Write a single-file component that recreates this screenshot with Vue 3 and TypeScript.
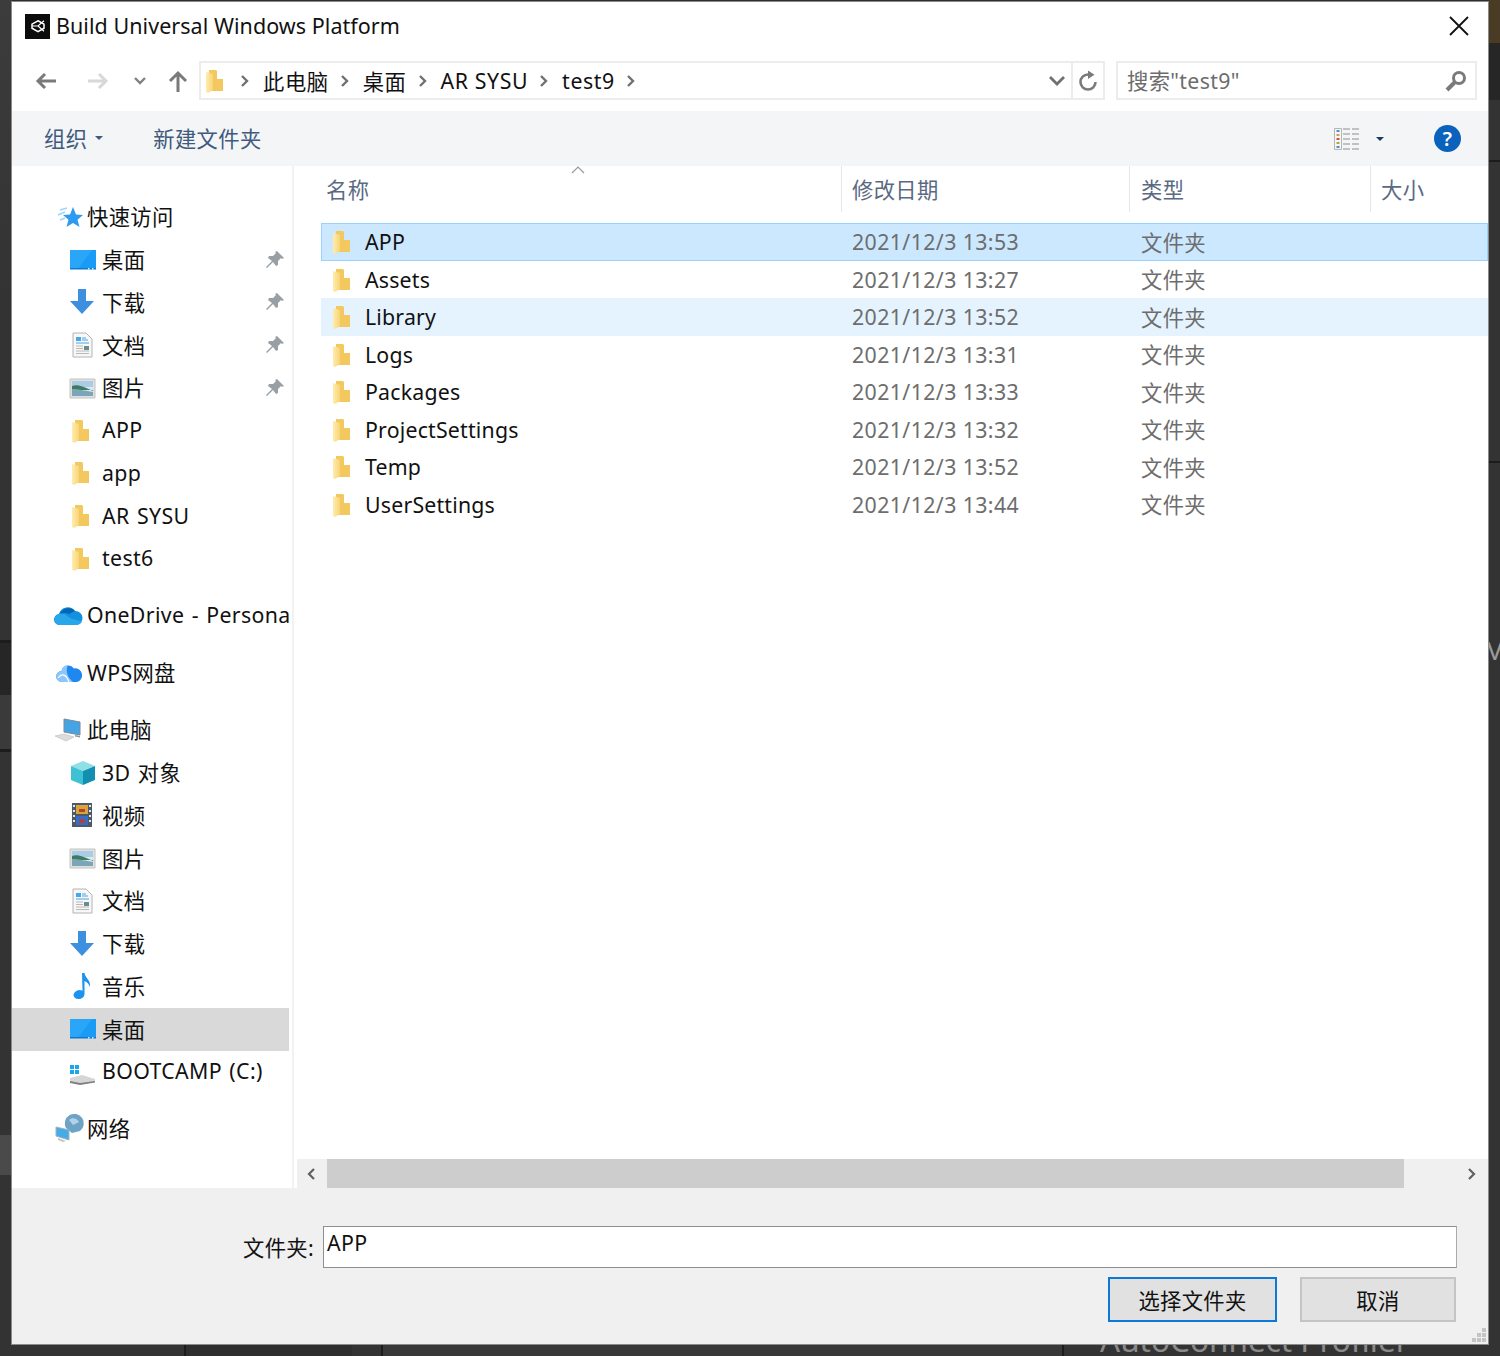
<script setup lang="ts">
interface Shape {
  d: string
  fill?: string
  stroke?: string
  width?: number
}

interface NavItem {
  label: string
  icon: string
  level: number
  pinned?: boolean
  active?: boolean
}

const icons: Record<string, Shape[]> = {
  star: [
    { d: 'M7 7l7-2M5 12l7-3M7 17l5-2', stroke: '#9ad6fb', width: 1.4 },
    { d: 'M20 4l3 7.500 7 .5-5.500 4.800 2 7.200-6.500-4-6.500 4 2-7.200L10 12l7-.5z', fill: '#2f9bf0' }
  ],
  desktop: [
    { d: 'M1 4h26v19H1z', fill: '#1a9bf5' },
    { d: 'M1 4h22L9 23H1z', fill: '#2aa6f8' },
    { d: 'M1 22h26v1.500H1z', fill: '#0c78cf' },
    { d: 'M19 22h1.500v1.500H19zM23 22h1.500v1.500H23z', fill: '#d8f0ff' }
  ],
  download: [
    { d: 'M9 1h8v12h8L13 26 1 13h8z', fill: '#3d8fe0' }
  ],
  doc: [
    { d: 'M4 2h13l6 6v18H4z', fill: '#f7f7f7', stroke: '#b4b4b4', width: 1 },
    { d: 'M7 6h5v4H7z', fill: '#4aa7e6' },
    { d: 'M13 7h4M13 9h6M7 12h13', stroke: '#4aa7e6', width: 1 },
    { d: 'M7 15h7M7 17.500h7M7 20h13M7 22.500h13', stroke: '#b8b8b8', width: 1 },
    { d: 'M15 15h5v4h-5z', fill: '#6b8c8a' }
  ],
  picture: [
    { d: 'M1 5h25v19H1z', fill: '#e0e0e0', stroke: '#c4c4c4', width: 1 },
    { d: 'M3 7h21v15H3z', fill: '#dbe8ee' },
    { d: 'M3 7h21v6H3z', fill: '#a9cde6' },
    { d: 'M3 12c6-2 12 1 21 5v-1H3z', fill: '#3f7a63' },
    { d: 'M3 15c8 0 13 2 21 3v4H3z', fill: '#7ba6b8' }
  ],
  folder: [
    { d: 'M6 3h7l1 1v8h6v12H6z', fill: '#f3c95f' },
    { d: 'M3 5l7 2v16l-5 3-2-1z', fill: 'url(#folderFill)' }
  ],
  cloud: [
    { d: 'M7 23a5.500 5.500 0 0 1-1-11 9 9 0 0 1 16-3 7 7 0 0 1 1 14z', fill: '#1490df' },
    { d: 'M7 23a5.500 5.500 0 0 1-2-10.500c6-3 9 2 13 4l11 3c-1 2-3 3.500-6 3.500z', fill: '#28a8ea' },
    { d: 'M7 12a9 9 0 0 1 15-3l-6 3c-3-1.500-6-1.500-9 0z', fill: '#0364b8' }
  ],
  wps: [
    { d: 'M9 23a5.500 5.500 0 0 1-.5-11A7 7 0 0 1 21 9.500 6.800 6.800 0 0 1 23.500 23z', fill: '#1f87f0' },
    { d: 'M9 23a5.500 5.500 0 0 1-.5-11A7 7 0 0 1 15 6c-3 6 0 13 5 17z', fill: '#8cc6fa' },
    { d: 'M5 19c4-5 8-4 11 4', stroke: '#fff', width: 1.2, fill: 'none' }
  ],
  computer: [
    { d: 'M11 3l16 3v13l-16-3z', fill: '#45a4e4', stroke: '#7b8a96', width: 1 },
    { d: 'M2 20l9-2 10 3-8 4z', fill: '#dcdcdc', stroke: '#bcbcbc', width: 0.6 },
    { d: 'M22 19l5 1v1.500l-5-1z', fill: '#8a96a0' }
  ],
  cube: [
    { d: 'M14 2l12 5-12 5L2 7z', fill: '#8de0e6' },
    { d: 'M2 7l12 5v14L2 21z', fill: '#3fc1d4' },
    { d: 'M14 12l12-5v14l-12 5z', fill: '#128fb0' }
  ],
  video: [
    { d: 'M3 2h20v24H3z', fill: '#4d5a66' },
    { d: 'M7 4h12v9H7z', fill: '#d9a43c' },
    { d: 'M7 15h12v9H7z', fill: '#2f6fd0' },
    { d: 'M10 8h6v3h-6zM10 18h6v4h-6z', fill: '#b8402f' },
    { d: 'M4 4h2v2H4zM4 9h2v2H4zM4 14h2v2H4zM4 19h2v2H4zM20 4h2v2h-2zM20 9h2v2h-2zM20 14h2v2h-2zM20 19h2v2h-2z', fill: '#e8e8e8' }
  ],
  music: [
    { d: 'M13 1h2.500c.5 5 6.500 7 5.500 14-1-3-3-5-5.500-6v13c0 3-3 5-6 5s-5-2-5-4 3-5 6-5c1 0 2 .3 3 .8z', fill: '#1c93ee' }
  ],
  drive: [
    { d: 'M1 7h4v4H1zM6 7h4v4H6zM1 12h4v4H1zM6 12h4v4H6z', fill: '#18a6ec' },
    { d: 'M1 20l12-3 13 4v3l-15 2-10-2z', fill: '#d6d6d6' },
    { d: 'M1 23l10 2 15-2v1.500L11 27 1 25z', fill: '#808080' }
  ],
  network: [
    { d: 'M13 13a9.500 9.500 0 1 1 14 3l-8 2z', fill: '#6da3c7' },
    { d: 'M16 5c3-3 8-2 10 2l-6 3z', fill: '#b4d2e4' },
    { d: 'M3 12l13 3v10L3 21z', fill: '#45ace8', stroke: '#a5b1ba', width: 1 },
    { d: 'M5 23l8 3-3 1-5-2z', fill: '#c6c6c6' }
  ]
}

const navGroups: NavItem[][] = [
  [
    { label: '快速访问', icon: 'star', level: 0 },
    { label: '桌面', icon: 'desktop', level: 1, pinned: true },
    { label: '下载', icon: 'download', level: 1, pinned: true },
    { label: '文档', icon: 'doc', level: 1, pinned: true },
    { label: '图片', icon: 'picture', level: 1, pinned: true },
    { label: 'APP', icon: 'folder', level: 1 },
    { label: 'app', icon: 'folder', level: 1 },
    { label: 'AR SYSU', icon: 'folder', level: 1 },
    { label: 'test6', icon: 'folder', level: 1 }
  ],
  [{ label: 'OneDrive - Personal', icon: 'cloud', level: 0 }],
  [{ label: 'WPS网盘', icon: 'wps', level: 0 }],
  [
    { label: '此电脑', icon: 'computer', level: 0 },
    { label: '3D 对象', icon: 'cube', level: 1 },
    { label: '视频', icon: 'video', level: 1 },
    { label: '图片', icon: 'picture', level: 1 },
    { label: '文档', icon: 'doc', level: 1 },
    { label: '下载', icon: 'download', level: 1 },
    { label: '音乐', icon: 'music', level: 1 },
    { label: '桌面', icon: 'desktop', level: 1, active: true },
    { label: 'BOOTCAMP (C:)', icon: 'drive', level: 1 }
  ],
  [{ label: '网络', icon: 'network', level: 0 }]
]

const crumbs = ['此电脑', '桌面', 'AR SYSU', 'test9']

const files = [
  { name: 'APP', date: '2021/12/3 13:53', state: 'selected' },
  { name: 'Assets', date: '2021/12/3 13:27', state: '' },
  { name: 'Library', date: '2021/12/3 13:52', state: 'hover' },
  { name: 'Logs', date: '2021/12/3 13:31', state: '' },
  { name: 'Packages', date: '2021/12/3 13:33', state: '' },
  { name: 'ProjectSettings', date: '2021/12/3 13:32', state: '' },
  { name: 'Temp', date: '2021/12/3 13:52', state: '' },
  { name: 'UserSettings', date: '2021/12/3 13:44', state: '' }
]
</script>

<template>
  <div class="screen">
    <svg class="defs" width="0" height="0" aria-hidden="true">
      <defs>
        <linearGradient id="folderFill" x1="0" y1="0" x2="1" y2="0">
          <stop offset="0" stop-color="#ffedb0" />
          <stop offset="1" stop-color="#f8d477" />
        </linearGradient>
      </defs>
    </svg>

    <!-- editor window showing behind the dialog -->
    <div class="gutter-left"></div>
    <div class="gutter-right"></div>
    <div class="gutter-bottom"></div>
    <div class="backdrop-text">AutoConnect Profiler</div>
    <div class="backdrop-v">V</div>

    <div class="dialog">
      <header class="titlebar">
        <span class="app-icon">
          <svg viewBox="0 0 24 24" width="18" height="18">
            <path d="M12 5l8 4.500v5.500l-8 4.500-8-4.500V9.500z" fill="none" stroke="#fff" stroke-width="2" />
            <path d="M4 12l8 0 8-7M12 12l8 7" fill="none" stroke="#fff" stroke-width="1.500" />
          </svg>
        </span>
        <span class="title">Build Universal Windows Platform</span>
        <svg class="close" viewBox="0 0 20 20" width="20" height="20">
          <path d="M1 1l18 18M19 1L1 19" stroke="#111" stroke-width="1.800" fill="none" />
        </svg>
      </header>

      <div class="navbar">
        <svg class="nav-arrow" viewBox="0 0 24 24" width="24" height="24">
          <path d="M22 12H4M11 5l-7 7 7 7" fill="none" stroke="#7a7a7a" stroke-width="3" />
        </svg>
        <svg class="nav-arrow forward" viewBox="0 0 24 24" width="24" height="24">
          <path d="M2 12h18M13 5l7 7-7 7" fill="none" stroke="#d8d8d8" stroke-width="3" />
        </svg>
        <svg class="nav-down" viewBox="0 0 14 10" width="14" height="10">
          <path d="M2 2l5 5 5-5" fill="none" stroke="#808080" stroke-width="2.400" />
        </svg>
        <svg class="nav-up" viewBox="0 0 24 24" width="24" height="24">
          <path d="M12 23V4M4 12l8-8 8 8" fill="none" stroke="#7a7a7a" stroke-width="3" />
        </svg>

        <div class="address">
          <svg class="crumb-folder" viewBox="0 0 28 28" width="28" height="28">
            <path v-for="(s, i) in icons.folder" :key="i" :d="s.d" :fill="s.fill" />
          </svg>
          <template v-for="crumb in crumbs" :key="crumb">
            <svg class="crumb-sep" viewBox="0 0 10 14" width="10" height="14">
              <path d="M2 2l5 5-5 5" fill="none" stroke="#707070" stroke-width="2.400" />
            </svg>
            <span class="crumb">{{ crumb }}</span>
          </template>
          <svg class="crumb-sep" viewBox="0 0 10 14" width="10" height="14">
            <path d="M2 2l5 5-5 5" fill="none" stroke="#707070" stroke-width="2.400" />
          </svg>
          <svg class="address-drop" viewBox="0 0 18 12" width="18" height="12">
            <path d="M2 2l7 7 7-7" fill="none" stroke="#707070" stroke-width="2.800" />
          </svg>
          <span class="refresh">
            <svg viewBox="0 0 22 22" width="22" height="22">
              <path d="M11 4.500A7.500 7.500 0 1 0 18.500 12" fill="none" stroke="#7a7a7a" stroke-width="2.600" />
              <path d="M11 .5V9l6.500-4.250z" fill="#7a7a7a" />
            </svg>
          </span>
        </div>

        <div class="search">
          <span class="search-text">搜索"test9"</span>
          <svg viewBox="0 0 24 24" width="24" height="24">
            <circle cx="15" cy="9" r="5.500" fill="none" stroke="#7a7a7a" stroke-width="3" />
            <path d="M10.500 13.500L3 21" stroke="#7a7a7a" stroke-width="4" fill="none" />
          </svg>
        </div>
      </div>

      <div class="toolbar">
        <span class="tool">组织<i class="caret"></i></span>
        <span class="tool new-folder">新建文件夹</span>
        <svg class="view-icon" viewBox="0 0 26 24" width="26" height="24">
          <path d="M.500 1.500h7v21h-7z" fill="#f6f6f6" stroke="#b5b5b5" />
          <path d="M2.500 3h3v2h-3z" fill="#4a90d0" />
          <path d="M2.500 7h3v2h-3z" fill="#d0a040" />
          <path d="M2.500 11h3v2h-3z" fill="#d05040" />
          <path d="M2.500 15h3v2h-3z" fill="#a0b040" />
          <path d="M2.500 19h3v2h-3z" fill="#4a90d0" />
          <path d="M9 2h7M18 2h7M9 7h7M18 7h7M9 12h7M18 12h7M9 17h7M18 17h7M9 22h7M18 22h7" stroke="#8d8d8d" stroke-width="1.200" />
        </svg>
        <i class="caret view-caret"></i>
        <span class="help">?</span>
      </div>

      <div class="main">
        <aside class="sidebar">
          <div v-for="(group, g) in navGroups" :key="g" class="nav-group">
            <div
              v-for="item in group"
              :key="item.label"
              class="nav-item"
              :class="{ active: item.active, child: item.level === 1 }"
            >
              <svg class="nav-icon" viewBox="0 0 28 28" width="28" height="28">
                <path
                  v-for="(s, i) in icons[item.icon]"
                  :key="i"
                  :d="s.d"
                  :fill="s.fill ?? 'none'"
                  :stroke="s.stroke"
                  :stroke-width="s.width"
                />
              </svg>
              <span class="nav-label">{{ item.label }}</span>
              <svg v-if="item.pinned" class="pin" viewBox="0 0 18 18" width="18" height="18">
                <path d="M11 0l7 7-2 1-1-1-3 3 0 4-2 1-3-4-6 6-1-1 6-6-4-3 1-2 4 0 3-3-1-1z" fill="#98a0a6" />
              </svg>
            </div>
          </div>
        </aside>

        <section class="content">
          <div class="list">
            <svg class="sort" viewBox="0 0 14 8" width="14" height="8">
              <path d="M1 7l6-6 6 6" fill="none" stroke="#9a9a9a" stroke-width="1.200" />
            </svg>
            <div class="columns">
              <span class="col col-name">名称</span>
              <span class="col col-date">修改日期</span>
              <span class="col col-type">类型</span>
              <span class="col col-size">大小</span>
            </div>
            <div v-for="file in files" :key="file.name" class="file" :class="file.state">
              <svg class="file-icon" viewBox="0 0 28 28" width="28" height="28">
                <path v-for="(s, i) in icons.folder" :key="i" :d="s.d" :fill="s.fill" />
              </svg>
              <span class="file-name">{{ file.name }}</span>
              <span class="file-date">{{ file.date }}</span>
              <span class="file-type">文件夹</span>
            </div>
          </div>
          <div class="hscroll">
            <svg viewBox="0 0 10 14" width="10" height="14">
              <path d="M8 2L3 7l5 5" fill="none" stroke="#606060" stroke-width="2.200" />
            </svg>
            <div class="thumb"></div>
            <svg viewBox="0 0 10 14" width="10" height="14">
              <path d="M2 2l5 5-5 5" fill="none" stroke="#606060" stroke-width="2.200" />
            </svg>
          </div>
        </section>
      </div>

      <footer class="footer">
        <div class="field">
          <label>文件夹:</label>
          <div class="field-input">APP</div>
        </div>
        <div class="buttons">
          <button class="btn primary">选择文件夹</button>
          <button class="btn">取消</button>
        </div>
        <svg class="grip" viewBox="0 0 15 15" width="15" height="15">
          <path d="M11 1h4v4h-4zM6 6h4v4H6zM11 6h4v4h-4zM1 11h4v4H1zM6 11h4v4H6zM11 11h4v4h-4z" fill="#c4c4c4" />
        </svg>
      </footer>
    </div>
  </div>
</template>

<style scoped>
.screen {
  position: relative;
  box-sizing: border-box;
  width: 1500px;
  height: 1356px;
  padding: 2px 12px 12px;
  overflow: hidden;
  background: #2e2e2e;
  font-family: "Noto Sans", "Noto Sans CJK SC", sans-serif;
  font-size: 21.3px;
  letter-spacing: 0.35px;
  color: #111;
}

.defs {
  position: absolute;
}

.gutter-left {
  position: absolute;
  left: 0;
  top: 0;
  width: 12px;
  height: 1356px;
  background: linear-gradient(#3c3c3c 0, #333 300px, #333 640px, #1c1c1c 640px 643px, #262626 643px 695px, #3a3a3a 695px 749px, #1c1c1c 749px 752px, #333 752px 1135px, #4a4a4a 1135px 1175px, #333 1175px);
}

.gutter-right {
  position: absolute;
  left: 1489px;
  top: 0;
  width: 11px;
  height: 1356px;
  background: linear-gradient(#4a3c24 0 43px, #262626 43px 100px, #333 100px 160px, #1c1c1c 160px 162px, #333 162px 461px, #1c1c1c 461px 463px, #333 463px);
}

.gutter-bottom {
  position: absolute;
  left: 0;
  top: 1344px;
  width: 1500px;
  height: 12px;
  background: linear-gradient(to right, #333 184px, #1c1c1c 184px 186px, #2e2e2e 186px 352px, #333 352px 381px, #1c1c1c 381px 383px, #383838 383px 1062px, #1c1c1c 1062px 1064px, #333 1064px);
}

.backdrop-text {
  position: absolute;
  left: 1100px;
  top: 1322px;
  font-size: 31.5px;
  letter-spacing: 0;
  line-height: 36px;
  color: #8a8a8a;
  white-space: nowrap;
}

.backdrop-v {
  position: absolute;
  left: 1487px;
  top: 632px;
  font-size: 26px;
  letter-spacing: 0;
  line-height: 36px;
  color: #9a9a9a;
}

.dialog {
  position: relative;
  display: flex;
  flex-direction: column;
  height: 100%;
  background: #fff;
  box-shadow: 0 0 0 1px #8a8a8a;
}

.titlebar {
  display: flex;
  align-items: center;
  height: 48px;
  padding: 0 19px 0 13px;
  flex: none;
}

.app-icon {
  display: flex;
  align-items: center;
  justify-content: center;
  width: 25px;
  height: 25px;
  margin-right: 6px;
  background: #0c0c0c;
}

.title {
  flex: 1;
  padding-bottom: 2px;
  font-size: 21.5px;
  letter-spacing: 0.05px;
  white-space: nowrap;
}

.navbar {
  display: flex;
  align-items: center;
  height: 61px;
  flex: none;
}

.nav-arrow {
  margin-left: 22px;
}

.nav-arrow.forward {
  margin-left: 28px;
}

.nav-down {
  margin-left: 23px;
}

.nav-up {
  margin-left: 19px;
}

.address {
  display: flex;
  align-items: center;
  box-sizing: border-box;
  width: 906px;
  height: 39px;
  margin-left: 9px;
  border: 2px solid #ececec;
}

.crumb-folder {
  margin: 0 -2px 0 2px;
}

.crumb-sep {
  margin: 0 13px 0 11px;
}

.crumb {
  padding-bottom: 1px;
  letter-spacing: 0.6px;
  white-space: nowrap;
}

.address-drop {
  margin-left: auto;
  margin-right: 5px;
}

.refresh {
  display: flex;
  align-items: center;
  justify-content: center;
  width: 30px;
  height: 100%;
  border-left: 2px solid #ececec;
}

.search {
  display: flex;
  align-items: center;
  justify-content: space-between;
  box-sizing: border-box;
  width: 361px;
  height: 39px;
  margin-left: 11px;
  padding: 0 7px 0 9px;
  border: 2px solid #ececec;
  color: #6d6d6d;
}

.search-text {
  padding-bottom: 3px;
}

.toolbar {
  display: flex;
  align-items: center;
  height: 55px;
  padding-left: 32px;
  background: #f3f5f7;
  color: #3f5a7c;
  flex: none;
}

.tool {
  display: flex;
  align-items: center;
  padding-bottom: 2px;
  white-space: nowrap;
}

.caret {
  display: inline-block;
  margin-left: 8px;
  border: 4px solid transparent;
  border-top-color: #3f5a7c;
  border-bottom-width: 0;
}

.new-folder {
  margin-left: 50px;
}

.view-icon {
  margin-left: auto;
}

.view-caret {
  margin-left: 16px;
  border-top-color: #1f3a60;
}

.help {
  display: flex;
  align-items: center;
  justify-content: center;
  width: 27px;
  height: 27px;
  margin: 0 27px 0 50px;
  border-radius: 50%;
  background: #0a62bd;
  color: #fff;
  font-size: 20px;
  font-weight: 600;
}

.main {
  display: flex;
  flex: 1;
  min-height: 0;
}

.sidebar {
  box-sizing: border-box;
  width: 282px;
  padding-top: 29.5px;
  border-right: 2px solid #f2f2f2;
  overflow: hidden;
  flex: none;
}

.nav-group {
  margin-bottom: 14.25px;
}

.nav-item {
  display: flex;
  align-items: center;
  width: 277px;
  height: 42.75px;
  padding-left: 41px;
  box-sizing: border-box;
  white-space: nowrap;
}

.nav-item.child {
  padding-left: 57px;
}

.nav-item.active {
  background: #d9d9d9;
}

.nav-icon {
  margin-right: 6px;
  overflow: visible;
  flex: none;
}

.nav-item.child .nav-icon {
  margin-right: 5px;
}

.nav-label {
  flex: 1;
  padding-bottom: 2px;
  word-spacing: 1.5px;
  overflow: hidden;
}

.pin {
  margin-right: 5px;
  flex: none;
}

.content {
  display: flex;
  flex-direction: column;
  flex: 1;
  min-width: 0;
  background: #fff;
}

.list {
  position: relative;
  flex: 1;
  padding-left: 27px;
}

.sort {
  position: absolute;
  left: 277px;
  top: 0;
}

.columns {
  display: grid;
  grid-template-columns: 521px 288px 241px 1fr;
  height: 46px;
  margin-bottom: 11px;
  align-items: stretch;
  color: #5a6a82;
}

.col {
  display: flex;
  align-items: center;
  padding: 0 0 2px 5px;
  border-right: 1px solid #e6e6e6;
}

.col-date,
.col-size {
  padding-left: 10px;
}

.col-type {
  padding-left: 11px;
}

.col-size {
  border-right: 0;
}

.file {
  display: grid;
  grid-template-columns: 487px 289px 1fr;
  align-items: center;
  box-sizing: border-box;
  height: 37.5px;
  position: relative;
  padding-left: 43px;
  border: 1px solid transparent;
}

.file.selected {
  background: #cce8ff;
  border-color: #99d1ff;
}

.file.hover {
  background: #e5f3ff;
}

.file-icon {
  position: absolute;
  left: 8px;
  top: 4px;
}

.file-name {
  letter-spacing: 0.2px;
  white-space: nowrap;
}

.file-date {
  letter-spacing: 0.4px;
}

.file-date,
.file-type {
  color: #6d6d6d;
}

.file-type {
  padding-bottom: 1px;
}

.hscroll {
  display: flex;
  align-items: center;
  height: 29px;
  margin-left: 3px;
  background: #f0f0f0;
  flex: none;
}

.hscroll svg {
  margin: 0 10px;
  flex: none;
}

.hscroll svg:first-child {
  margin: 0 11px 0 9px;
}

.thumb {
  width: 1077px;
  height: 100%;
  margin-right: 53px;
  background: #cdcdcd;
  flex: none;
}

.footer {
  position: relative;
  height: 156px;
  background: #f0f0f0;
  flex: none;
}

.field {
  display: flex;
  align-items: flex-start;
  margin-top: 38px;
  padding-left: 231px;
}

.field label {
  line-height: 44px;
  margin-right: 9px;
  white-space: nowrap;
}

.field-input {
  box-sizing: border-box;
  width: 1134px;
  height: 42px;
  padding-left: 3px;
  border: 1px solid #8f8f8f;
  border-right-color: #ababab;
  background: #fff;
  line-height: 32px;
}

.buttons {
  display: flex;
  justify-content: flex-end;
  gap: 23px;
  margin-top: 7px;
  padding-right: 32px;
}

.btn {
  width: 156px;
  height: 45px;
  padding: 0;
  border: 2px solid #c4c4c4;
  background: #e1e1e1;
  color: #111;
  font: inherit;
  letter-spacing: inherit;
}

.btn.primary {
  width: 169px;
  border-color: #0b79d5;
}

.grip {
  position: absolute;
  right: 2px;
  bottom: 2px;
}
</style>

<style>
body {
  margin: 0;
  background: #333;
}
</style>
